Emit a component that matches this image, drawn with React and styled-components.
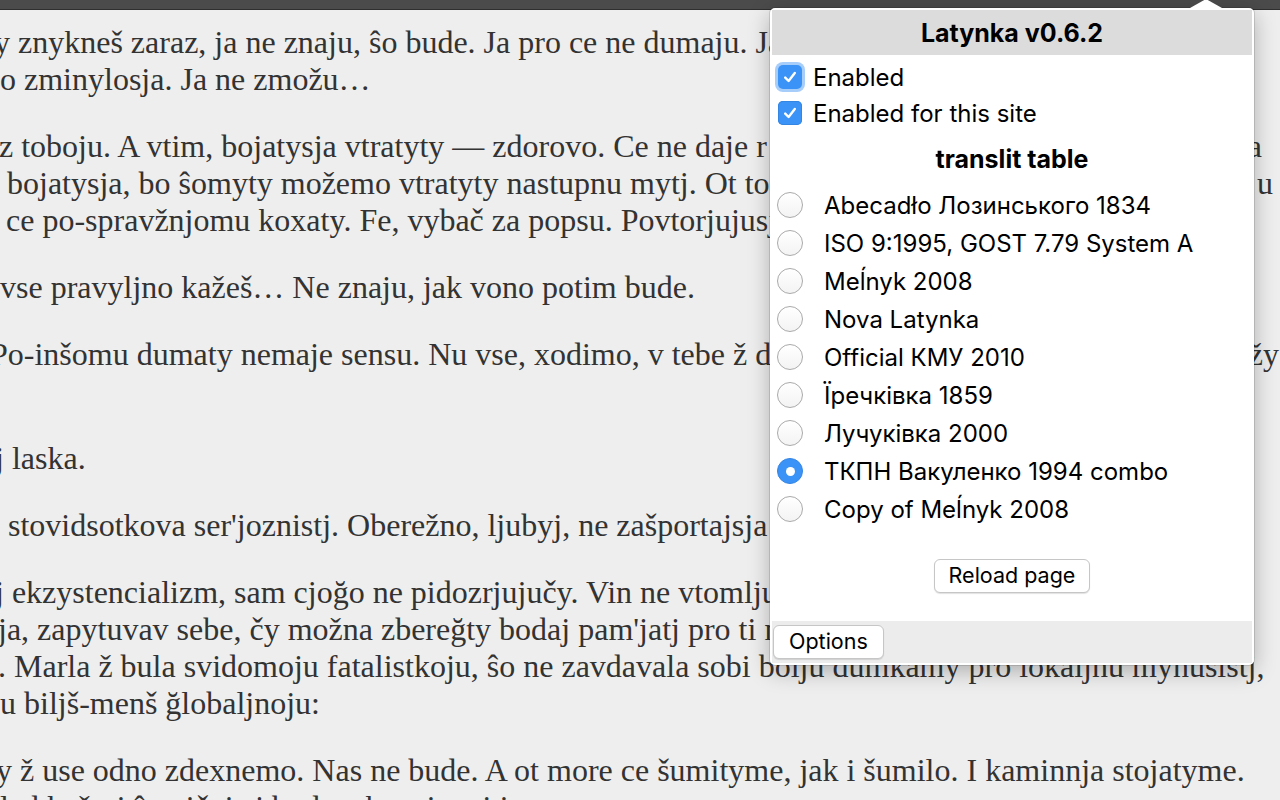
import React from "react";
import styled, { createGlobalStyle, css } from "styled-components";

const GlobalStyle = createGlobalStyle`
  html, body {
    margin: 0;
    padding: 0;
    background: #eeeeee;
    overflow: hidden;
  }
  body {
    width: 1280px;
    height: 800px;
  }
`;

const Page = styled.div`
  position: relative;
  width: 1280px;
  height: 800px;
  overflow: hidden;
  background: #eeeeee;
`;

const TopBar = styled.div`
  height: 9px;
  background: #4b4b4b;
  border-bottom: 1px solid #2f2f2f;
`;

const Article = styled.div`
  padding-top: 14px;
  font-family: "Liberation Serif", "Times New Roman", serif;
  font-size: 32px;
  color: #333333;
`;

const Paragraph = styled.p`
  margin: 0 0 30px 0;
`;

const Line = styled.div`
  white-space: nowrap;
  margin-left: ${({ $indent }) => $indent || 0}px;
  ${({ $width }) =>
    $width &&
    css`
      width: ${$width}px;
      display: flex;
      justify-content: space-between;
    `}
`;

const Popup = styled.div`
  position: absolute;
  left: 770px;
  top: 8px;
  width: 480px;
  padding: 2px;
  background: #ffffff;
  border-radius: 5px;
  box-shadow: 0 0 0 1px rgba(0, 0, 0, 0.12), 0 6px 22px rgba(0, 0, 0, 0.28);
  font-family: Inter, "Noto Sans", sans-serif;
  color: #000;
  display: flex;
  flex-direction: column;
`;

const Arrow = styled.div`
  position: absolute;
  top: -9px;
  left: 420px;
  width: 0;
  height: 0;
  border-left: 16px solid transparent;
  border-right: 16px solid transparent;
  border-bottom: 9px solid #ffffff;
`;

const Header = styled.div`
  height: 45px;
  background: #dcdcdc;
  display: flex;
  align-items: center;
  justify-content: center;
  font-weight: 700;
  font-size: 25px;
`;

const CheckRow = styled.label`
  height: 36px;
  display: flex;
  align-items: center;
  gap: 11px;
  padding-left: 6px;
  font-size: 24px;
  &:first-of-type {
    margin-top: 4px;
  }
`;

const CheckBox = styled.span`
  width: 24px;
  height: 24px;
  border-radius: 5px;
  background: #3b93f7;
  display: flex;
  align-items: center;
  justify-content: center;
  box-shadow: ${({ $focused }) =>
    $focused ? "0 0 0 3px #a7cdfb" : "inset 0 0 0 1px #3586e3"};
`;

const SectionTitle = styled.div`
  height: 36px;
  margin-top: 10px;
  display: flex;
  align-items: center;
  justify-content: center;
  font-weight: 700;
  font-size: 25px;
`;

const RadioList = styled.div`
  display: flex;
  flex-direction: column;
  margin-top: 9px;
`;

const RadioRow = styled.label`
  height: 38px;
  display: flex;
  align-items: center;
  gap: 21px;
  padding-left: 5px;
  font-size: 24px;
`;

const Radio = styled.span`
  width: 26px;
  height: 26px;
  border-radius: 50%;
  box-sizing: border-box;
  display: flex;
  align-items: center;
  justify-content: center;
  ${({ $checked }) =>
    $checked
      ? css`
          background: #3b93f7;
          border: 1px solid #3586e3;
          &::after {
            content: "";
            width: 9px;
            height: 9px;
            border-radius: 50%;
            background: #ffffff;
          }
        `
      : css`
          background: linear-gradient(#ffffff, #f3f3f3);
          border: 1px solid #aaaaaa;
        `}
`;

const ReloadWrap = styled.div`
  display: flex;
  justify-content: center;
  margin-top: 31px;
  margin-bottom: 28px;
`;

const Button = styled.button`
  height: 34px;
  padding: 0 ${({ $pad }) => $pad || 14}px;
  background: #ffffff;
  border: 1px solid #c6c6c6;
  border-radius: 6px;
  box-shadow: 0 1px 1px rgba(0, 0, 0, 0.12);
  font-family: Inter, "Noto Sans", sans-serif;
  font-size: 21.5px;
  color: #000;
  line-height: 1;
`;

const Footer = styled.div`
  height: 42px;
  background: #ececec;
  display: flex;
  align-items: flex-start;
  padding: 4px 0 0 1px;
  box-sizing: border-box;
`;

const Check = () => (
  <svg width="16" height="16" viewBox="0 0 16 16">
    <path
      d="M3.2 8.6 L6.6 12 L12.8 4"
      fill="none"
      stroke="#ffffff"
      strokeWidth="2.4"
      strokeLinecap="round"
      strokeLinejoin="round"
    />
  </svg>
);

const tables = [
  "Abecadło Лозинського 1834",
  "ISO 9:1995, GOST 7.79 System A",
  "Meĺnyk 2008",
  "Nova Latynka",
  "Official КМУ 2010",
  "Їречківка 1859",
  "Лучуківка 2000",
  "ТКПН Вакуленко 1994 combo",
  "Copy of Meĺnyk 2008",
];

const paragraphs = [
  [
    { text: "y znykneš zaraz, ja ne znaju, ŝo bude. Ja pro ce ne dumaju. Ja ne xoču, ŝob use", indent: -6 },
    { text: "o zminylosja. Ja ne zmožu…" },
  ],
  [
    { left: "z toboju. A vtim, bojatysja vtratyty — zdorovo. Ce ne daje r", right: "a", width: 1263, indent: -1 },
    { left: "bojatysja, bo ŝomyty možemo vtratyty nastupnu mytj. Ot tod", right: "u", width: 1266, indent: 7 },
    { text: "ce po-spravžnjomu koxaty. Fe, vybač za popsu. Povtorjujusja, ja znaju, ŝo", indent: 6 },
  ],
  [{ text: "vse pravyljno kažeš… Ne znaju, jak vono potim bude." }],
  [
    { left: "Po-inšomu dumaty nemaje sensu. Nu vse, xodimo, v tebe ž d", right: "žy", width: 1289, indent: -10 },
    { text: "\u00a0" },
  ],
  [{ text: "j laska.", indent: -5 }],
  [{ text: "stovidsotkova ser'joznistj. Oberežno, ljubyj, ne zašportajsja ob kaminj.", indent: 8 }],
  [
    { text: "j ekzystencializm, sam cjoğo ne pidozrjujučy. Vin ne vtomljuvavsja ce pytaty", indent: -5 },
    { text: "ja, zapytuvav sebe, čy možna zbereğty bodaj pam'jatj pro ti mytji, ŝo mynuly.", indent: -2 },
    { text: ". Marla ž bula svidomoju fatalistkoju, ŝo ne zavdavala sobi bolju dumkamy pro lokaljnu mynusistj,", indent: -2 },
    { text: "u biljš-menš ğlobaljnoju:" },
  ],
  [
    { text: "y ž use odno zdexnemo. Nas ne bude. A ot more ce šumityme, jak i šumilo. I kaminnja stojatyme.", indent: -4 },
    { text: "lad kažutj ŝo vičnistj bude tak stojaty i j" },
  ],
];

const App = () => {
  return (
    <Page>
      <GlobalStyle />
      <TopBar />
      <Article>
        {paragraphs.map((lines, i) => (
          <Paragraph key={i}>
            {lines.map((line, j) =>
              line.right ? (
                <Line key={j} $indent={line.indent} $width={line.width}>
                  <span>{line.left}</span>
                  <span>{line.right}</span>
                </Line>
              ) : (
                <Line key={j} $indent={line.indent}>
                  {line.text}
                </Line>
              )
            )}
          </Paragraph>
        ))}
      </Article>

      <Popup>
        <Arrow />
        <Header>Latynka v0.6.2</Header>
        <CheckRow>
          <CheckBox $focused>
            <Check />
          </CheckBox>
          Enabled
        </CheckRow>
        <CheckRow>
          <CheckBox>
            <Check />
          </CheckBox>
          Enabled for this site
        </CheckRow>
        <SectionTitle>translit table</SectionTitle>
        <RadioList>
          {tables.map((name, i) => (
            <RadioRow key={name}>
              <Radio $checked={i === 7} />
              {name}
            </RadioRow>
          ))}
        </RadioList>
        <ReloadWrap>
          <Button>Reload page</Button>
        </ReloadWrap>
        <Footer>
          <Button $pad={15}>Options</Button>
        </Footer>
      </Popup>
    </Page>
  );
};

export default App;
